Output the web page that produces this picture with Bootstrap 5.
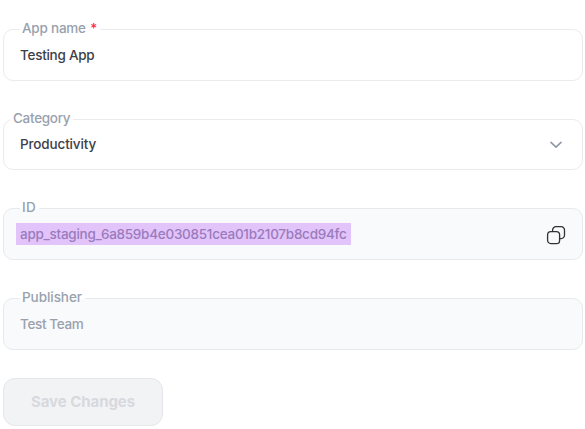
<!DOCTYPE html>
<html lang="en">
<head>
<meta charset="utf-8">
<meta name="viewport" content="width=device-width, initial-scale=1">
<title>App settings</title>
<link href="https://cdn.jsdelivr.net/npm/bootstrap@5.3.0/dist/css/bootstrap.min.css" rel="stylesheet">
<style>
body{font-family:Inter,"Liberation Sans",sans-serif;font-size:13.5px;font-weight:500;line-height:20px;color:#3c4047;background:#fff;overflow:hidden}
.settings{padding:29px 2px 0 3px}
.field{height:52px;border:1px solid #ebebed;border-radius:10px;padding:0 16px;margin-bottom:38px}
.field.select-field{height:51px;padding-bottom:1px}
.field.locked{background:#f9fafc;border-color:#e8e9ee;color:#9aa1ac}
.field.publisher{margin-bottom:28px}
.field-label{left:16px;top:-12px;padding:0 3px 0 2px;color:#98a1ae;background:#fff;letter-spacing:-.22px}
.select-field .field-label{left:7px;letter-spacing:-.3px}
.locked .field-label{background:linear-gradient(#fff 12px,#f9fafc 12px);letter-spacing:-.06px}
.id-label{letter-spacing:.4px}
.req{color:#fb2c36;margin-left:1px}
.app-value{letter-spacing:-.27px}
.category-value{letter-spacing:-.15px}
.team-value{letter-spacing:-.36px}
.picked{background:#e2c4fa;color:#9a7bbd;padding:0 4px;margin-left:-4px;height:22px;line-height:22px;letter-spacing:-.265px}
.copy-icon{margin-top:1px}
.save{width:160px;height:48px;border:1px solid #e5e6ea;border-radius:12px;background:#f2f3f5;color:#d7d9de;font-size:15px;font-weight:700;letter-spacing:-.05px}
</style>
<script src="https://cdn.jsdelivr.net/npm/bootstrap@5.3.0/dist/js/bootstrap.bundle.min.js"></script>
</head>
<body>
<form class="settings">
  <div class="field position-relative d-flex align-items-center">
    <label class="field-label position-absolute">App name <span class="req">*</span></label>
    <span class="app-value">Testing App</span>
  </div>
  <div class="field select-field position-relative d-flex align-items-center justify-content-between">
    <label class="field-label position-absolute">Category</label>
    <span class="category-value">Productivity</span>
    <svg width="20" height="20" viewBox="0 0 20 20" fill="none" stroke="#8f99a6" stroke-width="1.6" stroke-linecap="round" stroke-linejoin="round"><path d="M5 8.3l5 4.8 5-4.8"/></svg>
  </div>
  <div class="field locked position-relative d-flex align-items-center justify-content-between">
    <label class="field-label position-absolute"><span class="id-label">ID</span></label>
    <span class="picked">app_staging_6a859b4e030851cea01b2107b8cd94fc</span>
    <svg class="copy-icon" width="20" height="20" viewBox="0 0 20 20" fill="none" stroke="#303238" stroke-width="1.3"><rect x="1.6" y="6.6" width="12" height="12" rx="3.2"/><path d="M6.6 6.6V5A3.3 3.3 0 0 1 9.9 1.7h5.3A3.3 3.3 0 0 1 18.5 5v5.3a3.3 3.3 0 0 1-3.3 3.3h-1.6"/></svg>
  </div>
  <div class="field locked publisher position-relative d-flex align-items-center">
    <label class="field-label position-absolute">Publisher</label>
    <span class="team-value">Test Team</span>
  </div>
  <button type="button" class="save d-flex align-items-center justify-content-center p-0">Save Changes</button>
</form>
</body>
</html>
